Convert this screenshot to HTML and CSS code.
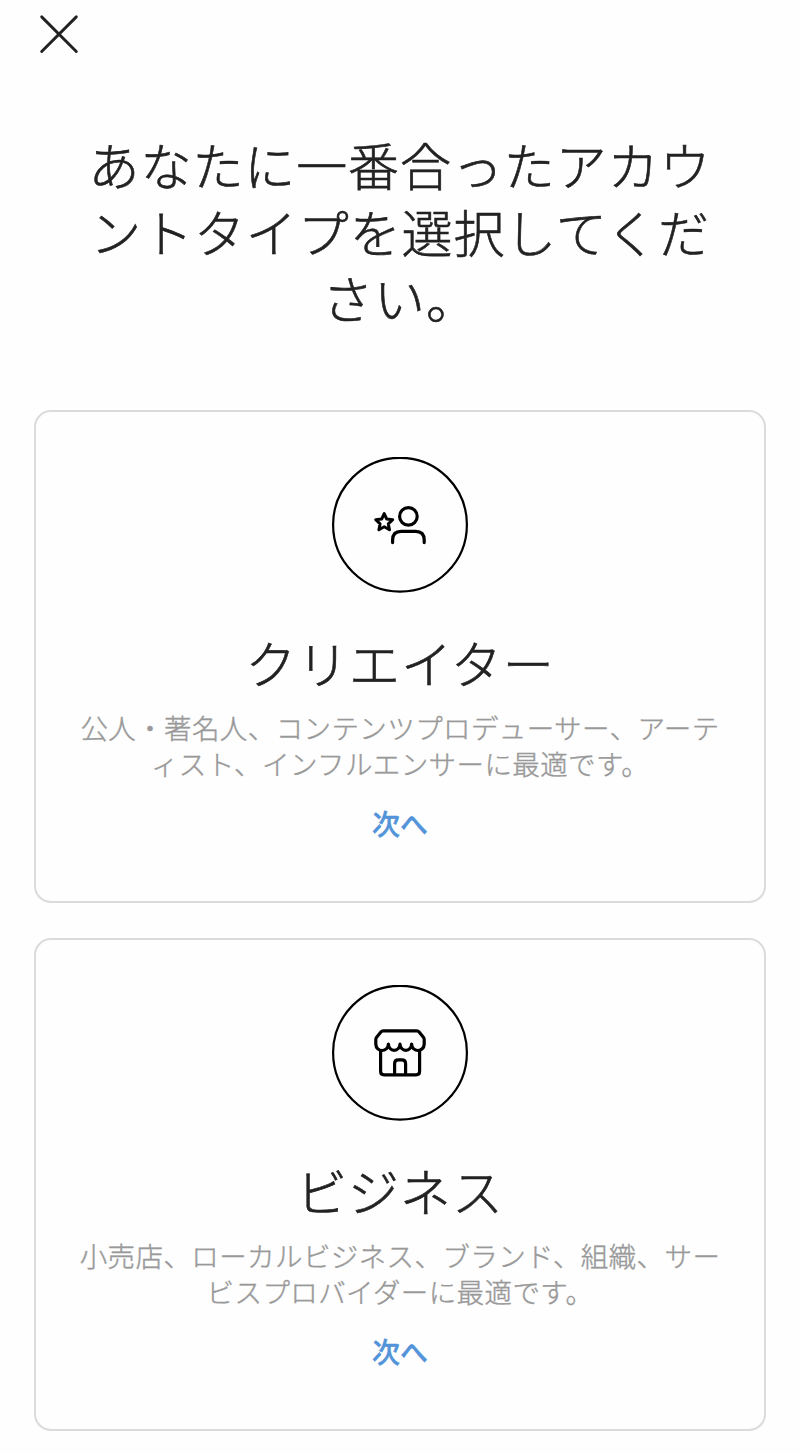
FILE: index.html
```
<!DOCTYPE html>
<html lang="ja">
<head>
  <meta charset="UTF-8">
  <meta name="viewport" content="width=device-width, initial-scale=1">
  <title>アカウントタイプ</title>
  <link rel="stylesheet" href="styles.css">
</head>
<body>
  <header>
    <button class="close" aria-label="閉じる">
      <svg width="40" height="40" viewBox="0 0 40 40">
        <path d="M2.7 2.9L37.3 37.5M37.3 2.9L2.7 37.5"/>
      </svg>
    </button>
  </header>

  <h1>あなたに一番合ったアカウ<br>ントタイプを選択してくだ<br>さい。</h1>

  <main class="cards">
    <!-- Creator -->
    <section class="card">
      <svg class="icon" width="136" height="136" viewBox="0 0 136 136">
        <circle class="ring" cx="68" cy="67.7" r="66.9"/>
        <path class="star" d="M52.2 56.6L54.7 62L60.7 62.7L56.3 66.8L57.5 72.7L52.2 69.8L46.9 72.7L48.1 66.8L43.7 62.7L49.7 62Z"/>
        <circle cx="76.4" cy="59.4" r="8.8"/>
        <path d="M60.6 85.6V83Q60.6 74.3 69.2 74.3H83.6Q92.2 74.3 92.2 83V85.6"/>
      </svg>
      <h2>クリエイター</h2>
      <p>公人・著名人、コンテンツプロデューサー、アーテ<br>ィスト、インフルエンサーに最適です。</p>
      <a class="next" href="#">次へ</a>
    </section>

    <!-- Business -->
    <section class="card">
      <svg class="icon" width="136" height="136" viewBox="0 0 136 136">
        <circle class="ring" cx="68" cy="67.7" r="66.9"/>
        <path d="M51.2 45.8H84.8Q86.1 45.8 86.9 46.8L91.2 52Q92.2 53.2 92.2 54.8V59.4A6.3 6.3 0 0 1 79.6 59A5.8 6.4 0 0 1 68 59A5.8 6.4 0 0 1 56.4 59A6.3 6.3 0 0 1 43.8 59.4V54.8Q43.8 53.2 44.8 52L49.1 46.8Q49.9 45.8 51.2 45.8Z"/>
        <path d="M48.6 65.6V86.2Q48.6 89.8 52.2 89.8H84Q87.6 89.8 87.6 86.2V65.6"/>
        <path d="M62.6 89.6V78.6Q62.6 74.8 66.4 74.8H69.8Q73.6 74.8 73.6 78.6V89.6"/>
      </svg>
      <h2>ビジネス</h2>
      <p>小売店、ローカルビジネス、ブランド、組織、サー<br>ビスプロバイダーに最適です。</p>
      <a class="next" href="#">次へ</a>
    </section>
  </main>
</body>
</html>
```

FILE: styles.css
```
* {
  box-sizing: border-box;
}
body {
  margin: 0;
  padding: 14px 34px 0;
  background: #fefefe;
  color: #222;
  font-family: "Noto Sans CJK JP", sans-serif;
  text-align: center;
}
header {
  display: flex;
  height: 117px;
  padding-left: 5px;
}
.close {
  width: 40px;
  height: 40px;
  padding: 0;
  border: none;
  background: none;
  cursor: pointer;
}
svg {
  display: block;
  fill: none;
  stroke: #000;
  stroke-width: 3.2;
  stroke-linecap: round;
  stroke-linejoin: round;
}
.close svg {
  stroke: #222;
  stroke-width: 2.9;
}
h1,
h2 {
  margin: 0;
  font-size: 51px;
  font-weight: 300;
  letter-spacing: 0.9px;
  white-space: nowrap;
  -webkit-text-stroke: 0.6px #222;
}
h1 {
  height: 279px;
  line-height: 66.5px;
}
h2 {
  line-height: 66px;
}
.cards {
  display: flex;
  flex-direction: column;
  gap: 35px;
}
.card {
  display: flex;
  flex-direction: column;
  align-items: center;
  height: 493px;
  padding-top: 45px;
  border: 2px solid #dbdbdb;
  border-radius: 17px;
}
.icon {
  margin-bottom: 36px;
}
.icon .ring {
  stroke-width: 2.2;
}
.icon .star {
  stroke-width: 3;
}
p {
  margin: 14px 0 0;
  color: #999;
  font-size: 27.5px;
  font-weight: 300;
  letter-spacing: 0.4px;
  line-height: 36px;
  white-space: nowrap;
  -webkit-text-stroke: 0.4px #999;
}
.next {
  margin-top: 24px;
  color: #5293d9;
  font-size: 28px;
  font-weight: 500;
  line-height: 36px;
  text-decoration: none;
  -webkit-text-stroke: 0.4px #5293d9;
}
```
